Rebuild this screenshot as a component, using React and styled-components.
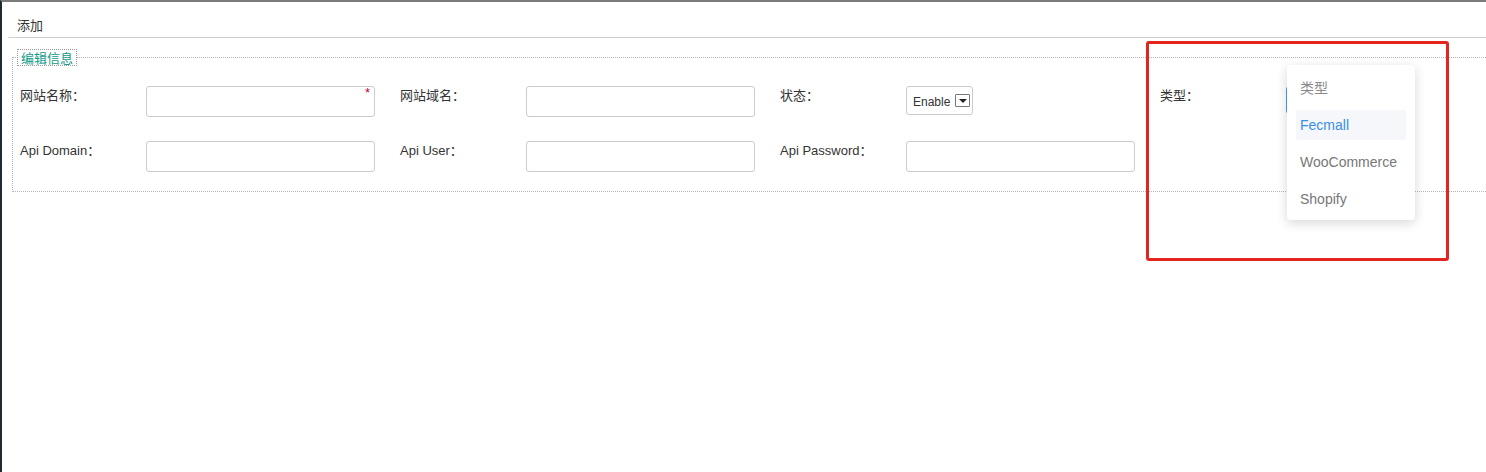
import React from 'react'
import styled, { createGlobalStyle } from 'styled-components'

const GlobalStyle = createGlobalStyle`
  html, body {
    margin: 0;
    padding: 0;
    background: #ffffff;
  }
  body {
    font-family: "Liberation Sans", "Noto Sans CJK SC", sans-serif;
    font-size: 13px;
    color: #333;
  }
`

const Page = styled.div`
  position: relative;
  width: 1486px;
  height: 472px;
  box-sizing: border-box;
  border-left: 2px solid #1f2a30;
  border-top: 2px solid #7b7b7b;
  overflow: hidden;

  &::before{
    content: '';
    position: absolute;
    top: -2px;
    left: 0;
    width: 60px;
    height: 2px;
    background: #1f2a30;
  }
`

const TabHeader = styled.div`
  margin-left: 6px;
  padding: 15px 0 2px 9px;
  line-height: 18px;
  font-size: 13px;
  color: #333;
  border-bottom: 1px solid #cfcfcf;
`

const Fieldset = styled.fieldset`
  margin: 11px 0 0 10px;
  padding: 20px 0 19px 7px;
  border: 1px dotted #b5b5b5;
  border-right: none;
  min-width: 0;

  legend{
    margin-left: -3px;
    padding: 0 3px;
    height: 17px;
    line-height: 17px;
    box-sizing: border-box;
    border: 1px dotted #9a9a9a;
    color: #139a8a;
    font-size: 13px;
  }
`

const Grid = styled.div`
  display: grid;
  grid-template-columns: repeat(4, 380px);
  row-gap: 24px;
`

const Field = styled.div`
  display: flex;
  align-items: flex-start;
`

const Label = styled.span`
  width: 126px;
  flex: none;
  line-height: 20px;
  color: #333;
  font-size: 13px;
`

const InputWrap = styled.div`
  position: relative;
`

const TextInput = styled.input`
  display: block;
  width: 229px;
  height: 31px;
  box-sizing: border-box;
  border: 1px solid #cccccc;
  border-radius: 3px;
  background: #fff;
  outline: none;
`

const Required = styled.span`
  position: absolute;
  top: 0;
  right: 5px;
  color: #c4003a;
  font-size: 13px;
  line-height: 14px;
`

const SelectBox = styled.div`
  display: flex;
  align-items: center;
  gap: 5px;
  width: 67px;
  height: 29px;
  box-sizing: border-box;
  padding: 2px 0 0 6px;
  border: 1px solid #cccccc;
  border-radius: 3px;
  font-size: 12px;
  color: #333;
`

const ArrowBtn = styled.span`
  display: inline-flex;
  align-items: center;
  justify-content: center;
  width: 15px;
  height: 13px;
  box-sizing: border-box;
  border: 1px solid #777;
  border-radius: 1px;
  margin-top: -2px;

  &::after{
    content: '';
    border-left: 4px solid transparent;
    border-right: 4px solid transparent;
    border-top: 4px solid #222;
  }
`

const TypeSelect = styled.div`
  position: relative;
  width: 110px;
  height: 28px;
  box-sizing: border-box;
  border: 1px solid #409eff;
  border-radius: 3px;
`

const Menu = styled.ul`
  position: absolute;
  top: -22px;
  left: 0;
  width: 128px;
  margin: 0;
  padding: 8px 9px 6px;
  box-sizing: border-box;
  list-style: none;
  background: #fff;
  border-radius: 4px;
  box-shadow: 0 3px 12px rgba(0, 0, 0, 0.16);
  display: flex;
  flex-direction: column;
  gap: 7px;
  z-index: 2;
`

const MenuItem = styled.li`
  height: 30px;
  line-height: 30px;
  padding-left: 4px;
  font-size: 14px;
  border-radius: 2px;
  white-space: nowrap;
  color: ${p => (p.$active ? '#3a8ee6' : p.$muted ? '#8a8a8a' : '#777')};
  background: ${p => (p.$active ? '#f5f7fa' : 'transparent')};
`

const Highlight = styled.div`
  position: absolute;
  left: 1144px;
  top: 39px;
  width: 297px;
  height: 214px;
  border: 3px solid #e3241f;
  border-radius: 3px;
  pointer-events: none;
  z-index: 3;
`

const rows = [
  [
    { label: '网站名称：', kind: 'text', required: true },
    { label: '网站域名：', kind: 'text' },
    { label: '状态：', kind: 'status' },
    { label: '类型：', kind: 'type' },
  ],
  [
    { label: 'Api Domain：', kind: 'text' },
    { label: 'Api User：', kind: 'text' },
    { label: 'Api Password：', kind: 'text' },
  ],
]

const typeOptions = ['类型', 'Fecmall', 'WooCommerce', 'Shopify']

function Control({ field }) {
  if (field.kind === 'status') {
    return (
      <SelectBox>
        Enable
        <ArrowBtn />
      </SelectBox>
    )
  }
  if (field.kind === 'type') {
    return (
      <TypeSelect>
        <Menu>
          {typeOptions.map((o, i) => (
            <MenuItem key={o} $muted={i === 0} $active={o === 'Fecmall'}>{o}</MenuItem>
          ))}
        </Menu>
      </TypeSelect>
    )
  }
  return (
    <InputWrap>
      <TextInput />
      {field.required && <Required>*</Required>}
    </InputWrap>
  )
}

export default function App() {
  return (
    <>
      <GlobalStyle />
      <Page>
        <TabHeader>添加</TabHeader>
        <Fieldset>
          <legend>编辑信息</legend>
          <Grid>
            {rows.flat().map(f => (
              <Field key={f.label}>
                <Label>{f.label}</Label>
                <Control field={f} />
              </Field>
            ))}
          </Grid>
        </Fieldset>
        <Highlight />
      </Page>
    </>
  )
}
